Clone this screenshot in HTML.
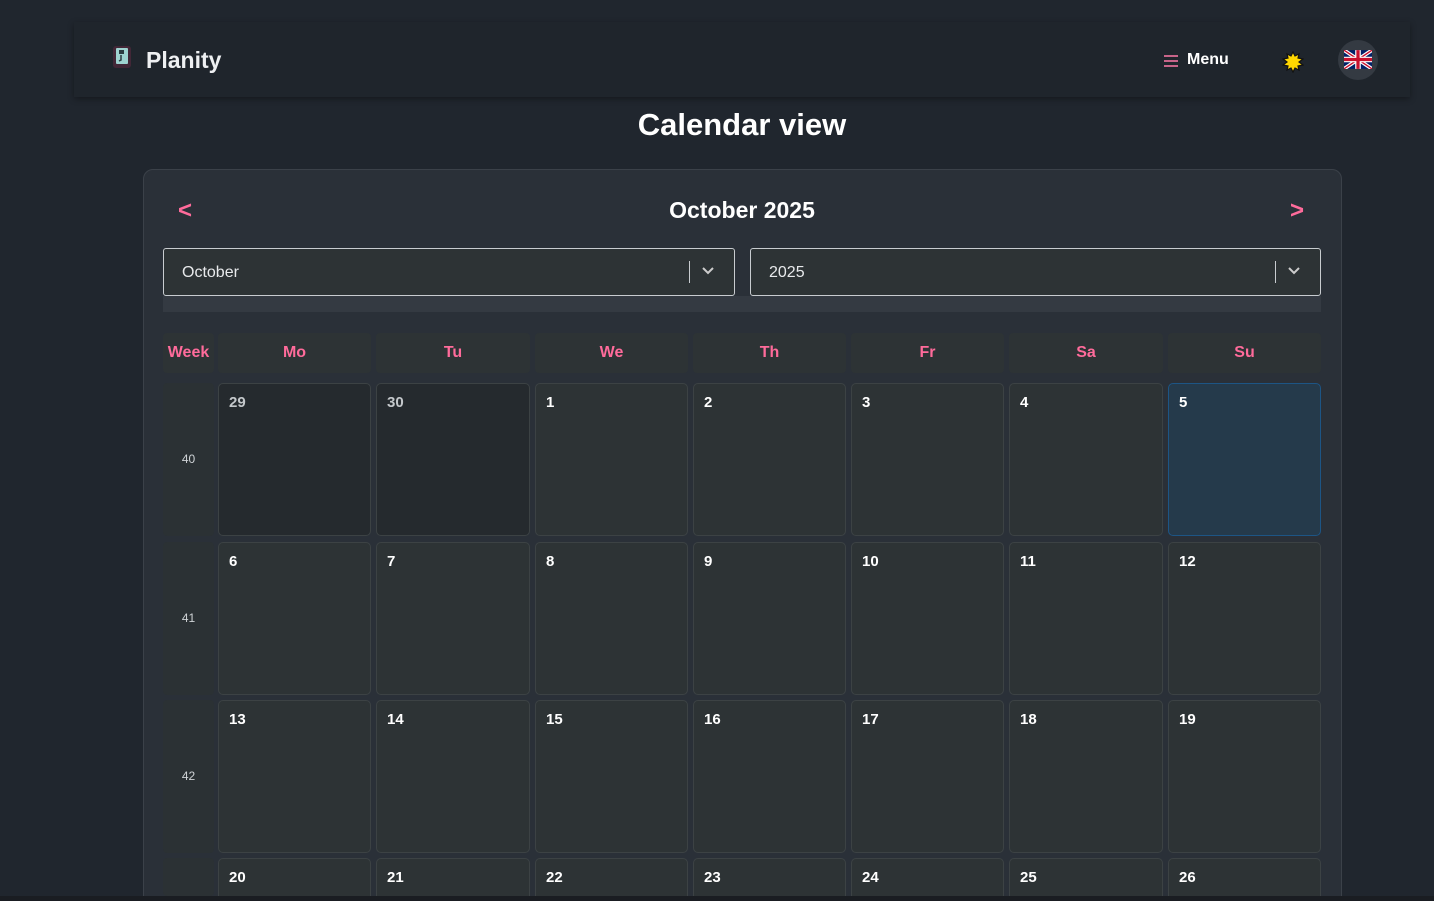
<!DOCTYPE html>
<html style="width:1434px;height:901px;overflow:hidden"><head><meta charset="utf-8"><style>
*{box-sizing:border-box;margin:0;padding:0}
body{width:1434px;height:901px;overflow:hidden;background:#20262e;font-family:"Liberation Sans",sans-serif;color:#fff;position:relative}
.a{position:absolute}
.nav{left:74px;top:22px;width:1336px;height:75px;background:#1f252c;box-shadow:0 2px 6px rgba(0,0,0,.35)}
.card{left:143px;top:169px;width:1199px;height:740px;background:#2a3038;border:1px solid #3b4149;border-radius:10px}
.sel{top:248px;height:48px;border:1px solid #c8ccd0;border-radius:3px;background:#2d3335;font-size:16px;padding:14px 18px;color:#e8eaec}
.sel .bar{position:absolute;right:44px;top:12px;width:1px;height:22px;background:#c8ccd0}
.sel svg{position:absolute;right:19px;top:17px}
.hd{top:333px;height:40px;background:#2d3335;border-radius:4px;color:#ff6b9b;font-weight:bold;font-size:16px;text-align:center;line-height:40px}
.wk{left:163px;width:51px;background:#2b3134;border-radius:4px;font-size:12px;color:#cfd3d6;text-align:center}
.c{background:#2d3335;border:1px solid #3c4244;border-radius:5px;font-weight:bold;font-size:15px;padding:10px 0 0 10px}
.p{background:#252a2e;color:#c4c8cb}
.t{background:#253a4b;border-color:#1d5585}
</style></head><body>
<div class="a nav"></div>
<svg class="a" style="left:112px;top:45px" width="20" height="26" viewBox="0 0 20 26"><rect x="1" y="1" width="18" height="22" rx="3" fill="#5a2a40" opacity=".6"/><rect x="4" y="3" width="12" height="16" rx="1" fill="#9ed3d0"/><rect x="7" y="5" width="5" height="4" fill="#2b3b40"/><path d="M9 10v5l-2 1" stroke="#2b3b40" stroke-width="1.5" fill="none"/></svg>
<div class="a" style="left:146px;top:47px;font-size:23px;font-weight:bold;color:#eef0f2">Planity</div>
<svg class="a" style="left:1163px;top:54px" width="16" height="14"><path d="M1 2h14M1 7h14M1 12h14" stroke="#ff7aa8" stroke-width="1.5"/></svg>
<div class="a" style="left:1187px;top:51px;font-size:16px;font-weight:bold">Menu</div>
<svg class="a" style="left:1282px;top:51px" width="22" height="22" viewBox="0 0 22 22"><polygon points="11,1 13,5 17,3 16,7 21,8 17,11 21,14 16,15 17,19 13,17 11,21 9,17 5,19 6,15 1,14 5,11 1,8 6,7 5,3 9,5" fill="#ffd700" stroke="#111" stroke-width="1.2"/></svg>
<div class="a" style="left:1338px;top:40px;width:40px;height:40px;border-radius:50%;background:#343a42"></div>
<svg class="a" style="left:1344px;top:50px" width="28" height="19" viewBox="0 0 60 40"><rect width="60" height="40" fill="#012169"/><path d="M0 0L60 40M60 0L0 40" stroke="#fff" stroke-width="8"/><path d="M0 0L60 40M60 0L0 40" stroke="#c8102e" stroke-width="3"/><path d="M30 0v40M0 20h60" stroke="#fff" stroke-width="12"/><path d="M30 0v40M0 20h60" stroke="#c8102e" stroke-width="7"/></svg>
<div class="a" style="left:0;width:1484px;top:107px;text-align:center;font-size:31px;font-weight:bold">Calendar view</div>
<div class="a card"></div>
<div class="a" style="left:178px;top:197px;font-size:24px;font-weight:bold;color:#ff6b9b">&lt;</div>
<div class="a" style="left:1290px;top:197px;font-size:24px;font-weight:bold;color:#ff6b9b">&gt;</div>
<div class="a" style="left:0;width:1484px;top:197px;text-align:center;font-size:23px;font-weight:bold">October 2025</div>
<div class="a sel" style="left:163px;width:572px;padding-top:15px">October<div class="bar"></div><svg width="14" height="10"><path d="M2 2l5 5 5-5" stroke="#ccc" stroke-width="2" fill="none"/></svg></div>
<div class="a sel" style="left:750px;width:571px;padding-top:15px">2025<div class="bar"></div><svg width="14" height="10"><path d="M2 2l5 5 5-5" stroke="#ccc" stroke-width="2" fill="none"/></svg></div>
<div class="a" style="left:163px;top:296px;width:1158px;height:16px;background:#343a42"></div>
<div class="a hd" style="left:163px;width:51px">Week</div>
<div id="g"></div>
<div class="a" style="left:0;top:896px;width:1434px;height:5px;background:#1a1d22"></div>
<script>
var xs=[218,376,535,693,851,1009,1168],ws=[153,154,153,153,153,154,153],ys=[383,542,700,858],d=["Mo","Tu","We","Th","Fr","Sa","Su"],h="";
for(var i=0;i<7;i++)h+='<div class="a hd" style="left:'+xs[i]+'px;width:'+ws[i]+'px">'+d[i]+'</div>';
var n=[[29,30,1,2,3,4,5],[6,7,8,9,10,11,12],[13,14,15,16,17,18,19],[20,21,22,23,24,25,26]];
for(var r=0;r<4;r++){var hh=r<3?153:38;h+='<div class="a wk" style="top:'+ys[r]+'px;height:'+hh+'px;line-height:153px">'+(r<3?40+r:'')+'</div>';
for(i=0;i<7;i++){var cl="a c"+(r==0&&i<2?" p":"")+(r==0&&i==6?" t":"");h+='<div class="'+cl+'" style="left:'+xs[i]+'px;width:'+ws[i]+'px;top:'+ys[r]+'px;height:'+(r<3?153:50)+'px">'+n[r][i]+'</div>';}}
document.getElementById("g").innerHTML=h;
</script>
<div class="a" style="left:0;top:896px;width:1434px;height:5px;background:#1a1d22;z-index:5"></div>
</body></html>
